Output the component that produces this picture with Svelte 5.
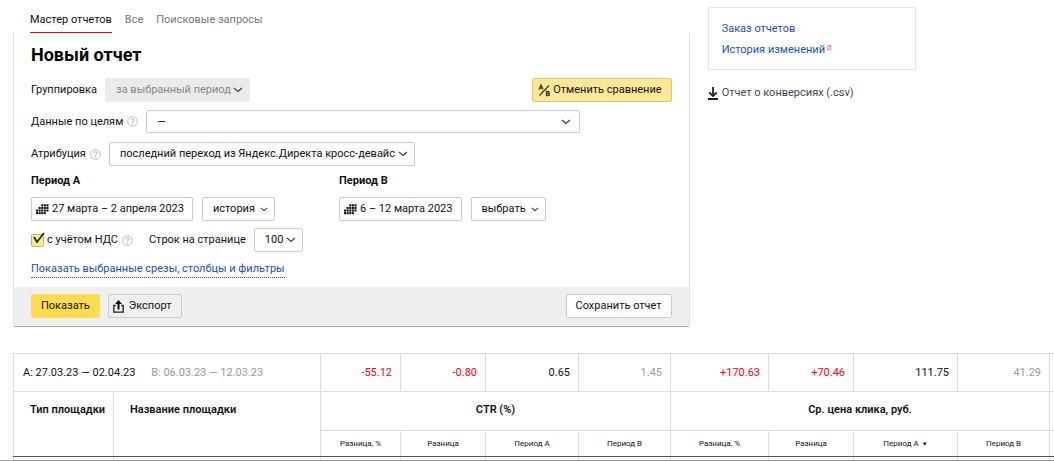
<script>
  const totals = [
    { text: '-55.12', tone: 'diff' },
    { text: '-0.80', tone: 'diff' },
    { text: '0.65', tone: '' },
    { text: '1.45', tone: 'muted' },
    { text: '+170.63', tone: 'diff' },
    { text: '+70.46', tone: 'diff' },
    { text: '111.75', tone: '' },
    { text: '41.29', tone: 'muted' }
  ];
  const columns = [100, 207, 80, 85, 93, 92, 98, 85, 104, 92, 80];
  const metrics = ['Разница, %', 'Разница', 'Период A', 'Период B'];
  const dots = [[0, 6], [0, 9], [3, 3], [3, 6], [3, 9], [6, 0], [6, 3], [6, 6], [6, 9], [9, 0], [9, 3], [9, 6], [9, 9], [12, 0], [12, 3], [12, 6]];
  let vat = $state(true);
</script>

{#snippet help()}
  <svg class="help" viewBox="0 0 11 11" aria-hidden="true">
    <circle cx="5.5" cy="5.5" r="4.8" fill="none" stroke="#bbb" />
    <path d="M4 4.4C4 2.3 7 2.4 7 4.2C7 5.2 5.6 5.2 5.6 6.5M5.6 7.4v1.2" fill="none" stroke="#aaa" />
  </svg>
{/snippet}

{#snippet calendar()}
  <svg class="calendar" viewBox="0 0 15 12" aria-hidden="true">
    {#each dots as [x, y]}
      <rect {x} {y} width="2.4" height="2.4" fill="#111" />
    {/each}
  </svg>
{/snippet}

<div class="page">
  <div class="top">
    <main>
      <nav>
        <a class="active" href="#master">Мастер отчетов</a>
        <a href="#all">Все</a>
        <a href="#queries">Поисковые запросы</a>
      </nav>

      <form class="panel" onsubmit={(e) => e.preventDefault()}>
        <div class="fields">
          <h1>Новый отчет</h1>
          <div class="row group">
            <label for="grouping">Группировка</label>
            <select id="grouping" disabled><option>за выбранный период</option></select>
            <button class="compare" type="button">
              <svg width="13" height="13" viewBox="0 0 13 13" fill="none" stroke="#3d3723" aria-hidden="true">
                <path d="M1.5 11.5L11 1.5" stroke-width="1.1" />
                <path d="M1 5.5L3 1L5 5.5M1.8 4.2h2.5" stroke-width="1.2" />
                <path d="M8.5 7.3v4.4h1.6c1.8 0 1.8-2.2 0-2.2H8.5h1.4c1.6 0 1.6-2.1 0-2.1z" stroke-width="1.3" />
              </svg>
              Отменить сравнение
            </button>
          </div>
          <div class="row goals">
            <label for="goals">Данные по целям</label>
            {@render help()}
            <select id="goals"><option>—</option></select>
          </div>
          <div class="row attribution">
            <label for="attribution">Атрибуция</label>
            {@render help()}
            <select id="attribution"><option>последний переход из Яндекс.Директа кросс-девайс</option></select>
          </div>
          <div class="periods">
            <section>
              <h2>Период A</h2>
              <div class="row">
                <button type="button" class="date">{@render calendar()}27 марта – 2 апреля 2023</button>
                <select class="small" aria-label="Период A"><option>история</option></select>
              </div>
            </section>
            <section>
              <h2>Период B</h2>
              <div class="row">
                <button type="button" class="date">{@render calendar()}6 – 12 марта 2023</button>
                <select class="small" aria-label="Период B"><option>выбрать</option></select>
              </div>
            </section>
          </div>
          <div class="row options">
            <label class="vat"><input type="checkbox" bind:checked={vat} />с учётом НДС</label>
            {@render help()}
            <label class="lines" for="lines">Строк на странице</label>
            <select id="lines"><option>100</option></select>
          </div>
          <a class="slices" href="#slices">Показать выбранные срезы, столбцы и фильтры</a>
        </div>
        <div class="footer">
          <button class="primary">Показать</button>
          <button class="export" type="button">
            <svg width="11" height="13" viewBox="0 0 11 13" aria-hidden="true">
              <path d="M5.5 0L9 4H6.5V9.5H4.5V4H2z" fill="#111" />
              <path d="M2.8 5.5H.8v6.7h9.4V5.5H8.2" fill="none" stroke="#222" stroke-width="1.3" />
            </svg>
            Экспорт
          </button>
          <button class="save" type="button">Сохранить отчет</button>
        </div>
      </form>
    </main>

    <aside>
      <div class="links">
        <a href="#orders">Заказ отчетов</a>
        <a href="#history">История изменений<sup>β</sup></a>
      </div>
      <a class="download" href="#csv">
        <svg width="10" height="13" viewBox="0 0 10 13" aria-hidden="true">
          <path d="M5 0V9M1.3 5.5L5 9L8.7 5.5M0 12H10" fill="none" stroke="#222" stroke-width="1.8" />
        </svg>
        Отчет о конверсиях (.csv)
      </a>
    </aside>
  </div>

  <div class="report">
    <table>
      <colgroup>
        {#each columns as width}<col style:width="{width}px" />{/each}
      </colgroup>
      <thead>
        <tr class="totals">
          <td colspan="2">A: 27.03.23 — 02.04.23 <span class="muted">B: 06.03.23 — 12.03.23</span></td>
          {#each totals as cell}<td class="number {cell.tone}">{cell.text}</td>{/each}
          <td></td>
        </tr>
        <tr class="heads">
          <th class="side" rowspan="2">Тип площадки</th>
          <th class="side" rowspan="2">Название площадки</th>
          <th colspan="4">CTR (%)</th>
          <th colspan="4">Ср. цена клика, руб.</th>
          <td></td>
        </tr>
        <tr class="metrics">
          {#each metrics as name}<th>{name}</th>{/each}
          {#each metrics as name, i}<th>{name}{#if i === 2}<span class="sort">▼</span>{/if}</th>{/each}
          <td></td>
        </tr>
      </thead>
      <tbody>
        <tr>{#each columns as _}<td></td>{/each}</tr>
      </tbody>
    </table>
  </div>
</div>

<style>
  :global(body) { margin: 0; background: #fff; }
  .page {
    font: 11px/18px Roboto, "Noto Sans", sans-serif;
    color: #111;
    overflow: hidden;
    border-bottom: 1px solid #999;
  }
  .page * { box-sizing: border-box; }
  .top {
    display: grid;
    grid-template-columns: 65% 20%;
    gap: 18px;
    padding-left: 13px;
    align-items: start;
  }
  nav {
    display: flex;
    gap: 13px;
    padding: 11px 17px 0;
  }
  nav a { color: #777; text-decoration: none; height: 22px; }
  nav .active { color: #111; border-bottom: 1px solid #f00; }
  .panel {
    border: 1px solid #e2e2e2;
    border-top: 0;
    border-bottom-color: #aaa;
    border-radius: 0 0 3px 3px;
  }
  .fields { padding: 10px 17px 9px; }
  h1 { font-size: 18px; line-height: 24px; margin: 0 0 11px; color: #000; }
  h2 { font-size: 11px; line-height: 18px; margin: 0 0 7px; }
  .row { display: flex; align-items: center; }
  .row select { margin-left: 8px; }
  button, select {
    font: inherit;
    color: #111;
    height: 24px;
    border: 1px solid #ccc;
    border-radius: 2px;
    background: #fff;
    padding: 0 9px;
    white-space: nowrap;
  }
  button { display: inline-flex; align-items: center; }
  select {
    appearance: none;
    padding: 0 18px 0 10px;
    background: #fff url("data:image/svg+xml,%3Csvg xmlns='http://www.w3.org/2000/svg' width='10' height='6'%3E%3Cpath d='M1 1l4 3.5L9 1' fill='none' stroke='%23444' stroke-width='1.3'/%3E%3C/svg%3E") no-repeat right 6px center;
  }
  select:disabled { background-color: #ebebeb; border-color: #ebebeb; color: #888; opacity: 1; }
  .row .small { background-size: 8px 5px; margin-left: 9px; }
  .compare { margin-left: auto; background: #ffe895; border-color: #d8c57e; padding: 0 9px 0 5px; gap: 2px; }
  .help { width: 11px; height: 11px; margin-left: 4px; flex: none; }
  .goals { margin-top: 8px; }
  .goals select { flex: 0 1 434px; height: 23px; background-position: right 8px center; }
  .attribution { margin-top: 9px; }
  .periods { display: grid; grid-template-columns: 308px auto; justify-content: start; margin-top: 6px; }
  .calendar { width: 13px; height: 11px; margin-right: 3px; }
  .date { padding: 0 8px 0 4px; }
  .options { margin-top: 7px; }
  .vat { display: flex; align-items: center; gap: 3px; }
  .vat input {
    appearance: none;
    margin: 0;
    width: 13px;
    height: 13px;
    border: 1px solid #c2b280;
    border-radius: 2px;
    background: #ffe895;
    position: relative;
  }
  .vat input:checked::after {
    content: "";
    position: absolute;
    left: 1px;
    top: -3px;
    width: 12px;
    height: 12px;
    background: url("data:image/svg+xml,%3Csvg xmlns='http://www.w3.org/2000/svg' width='12' height='12'%3E%3Cpath d='M1 5l3 5L11 1' fill='none' stroke='%23222' stroke-width='1.8'/%3E%3C/svg%3E");
  }
  .lines { margin-left: 16px; }
  .slices {
    display: inline-block;
    color: #2350b8;
    text-decoration: none;
    border-bottom: 1px dotted #2350b8;
    line-height: 16px;
    margin-top: 9px;
  }
  .footer { display: flex; background: #eeeff1; padding: 7px 17px 8px; }
  .primary { background: #ffdb4d; border-color: #ffdb4d; margin-right: 8px; }
  .export { background: transparent; gap: 5px; padding: 0 9px 0 4px; }
  .save { margin-left: auto; background: #fff; }
  aside { padding-top: 7px; }
  .links {
    display: grid;
    gap: 3px;
    border: 1px solid #e5e5e5;
    border-radius: 2px;
    padding: 12px 13px 10px;
    margin-bottom: 14px;
  }
  .links a { color: #1a4fc0; text-decoration: none; }
  sup { font-size: 8px; line-height: 8px; color: #f55; margin-left: 2px; vertical-align: 3px; }
  .download { display: flex; align-items: center; gap: 4px; color: #445; text-decoration: none; white-space: nowrap; }
  .report { margin: 26px 0 0 13px; overflow: hidden; }
  table { border-collapse: collapse; table-layout: fixed; width: 1116px; }
  td, th { border: 1px solid #ddd; padding: 0; color: #111; }
  .totals td { height: 38px; padding: 0 9px; }
  .totals .number { text-align: right; padding: 0 8px; }
  .totals .diff { color: #f00; }
  .totals .muted { color: #999; }
  .totals span { margin-left: 13px; }
  .heads th, .heads td { height: 39px; font-weight: 600; padding-bottom: 2px; }
  .heads .side { text-align: left; vertical-align: top; padding: 9px 0 0 16px; white-space: nowrap; }
  .metrics th { height: 26px; font-size: 8px; font-weight: 400; }
  .sort { font-size: 6px; line-height: 8px; margin-left: 3px; }
  tbody td { height: 3px; border-top: 1px solid #555; border-bottom: 0; }
  .metrics th, .metrics td, .heads .side { border-bottom-color: #555; }
</style>
